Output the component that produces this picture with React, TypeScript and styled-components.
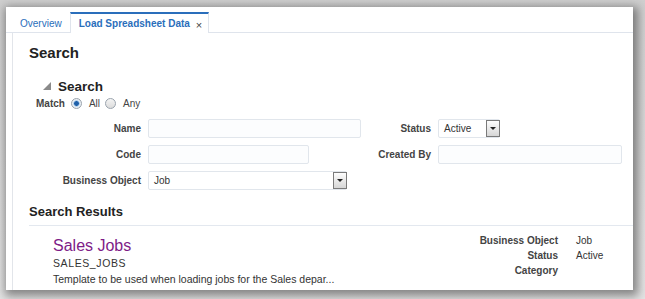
import React from "react";
import styled, { createGlobalStyle } from "styled-components";

const Global = createGlobalStyle`
  html, body { margin: 0; padding: 0; }
  body {
    background: #e6e6e6;
    font-family: "Liberation Sans", Arial, sans-serif;
    width: 645px;
    height: 299px;
    overflow: hidden;
  }
`;

const Stage = styled.div`
  width: 645px;
  height: 299px;
  padding: 7px 12px 9px 6px;
  box-sizing: border-box;
  background: linear-gradient(#cfcfcf, #e4e4e4);
`;

const Card = styled.div`
  width: 627px;
  height: 283px;
  background: #fff;
  box-shadow: 2px 3px 9px 3px rgba(0, 0, 0, 0.42);
  display: flex;
  flex-direction: column;
  overflow: hidden;
`;

const TabBar = styled.div`
  height: 26px;
  display: flex;
  align-items: flex-end;
  padding-left: 6px;
  border-bottom: 1px solid #dfe4ec;
  box-sizing: border-box;
`;

const Tab = styled.div<{ $active?: boolean }>`
  height: ${(p) => (p.$active ? "21px" : "20px")};
  display: flex;
  align-items: center;
  gap: 6px;
  padding: 0 ${(p) => (p.$active ? "6px 0 8px" : "8px")};
  font-size: 10px;
  color: #2a6ebb;
  font-weight: ${(p) => (p.$active ? "bold" : "normal")};
  background: #fff;
  box-sizing: border-box;
  border-top: ${(p) => (p.$active ? "2px solid #2a6ebb" : "none")};
  border-left: ${(p) => (p.$active ? "1px solid #dfe4ec" : "none")};
  border-right: ${(p) => (p.$active ? "1px solid #dfe4ec" : "none")};
  margin-bottom: ${(p) => (p.$active ? "-1px" : "0")};
  padding-top: ${(p) => (p.$active ? "0" : "2px")};
`;

const Close = styled.span`
  font-size: 11px;
  font-weight: normal;
  color: #444;
  margin-top: 2px;
`;

const Panel = styled.div`
  flex: 1;
  margin-left: 6px;
  border-left: 1px solid #e2e5ea;
  padding-left: 16px;
  display: flex;
  flex-direction: column;
`;

const H1 = styled.h1`
  margin: 11px 0 0;
  font-size: 15px;
  line-height: 18px;
  font-weight: bold;
  color: #222;
`;

const SubHeader = styled.div`
  margin: 15px 0 0 14px;
  display: flex;
  align-items: center;
  gap: 7px;
  height: 18px;
`;

const H2 = styled.h2`
  margin: 0;
  font-size: 13.5px;
  font-weight: bold;
  color: #222;
`;

const MatchRow = styled.div`
  margin: 1px 0 0 7px;
  display: flex;
  align-items: center;
  height: 14px;
  font-size: 10px;
  color: #444;
`;

const MatchLabel = styled.span`
  font-weight: bold;
  color: #444;
  margin-right: 6px;
`;

const Radio = styled.span<{ $on?: boolean }>`
  width: 9px;
  height: 9px;
  border-radius: 50%;
  border: 1px solid #9aa3ad;
  background: ${(p) =>
    p.$on
      ? "radial-gradient(circle, #1f5fa8 0 2px, #7fb1e0 2.5px, #e8eef4 3.5px)"
      : "linear-gradient(#f4f4f4, #dcdcdc)"};
  margin-right: 7px;
`;

const RadioText = styled.span`
  margin-right: 5px;
`;

const Form = styled.div`
  margin: 9px 0 0 -16px;
  display: grid;
  grid-template-columns: 128px 213px 63px 184px;
  grid-auto-rows: 19px;
  column-gap: 7px;
  row-gap: 7px;
  align-items: center;
`;

const Label = styled.label`
  text-align: right;
  font-size: 10px;
  font-weight: bold;
  color: #444;
  white-space: nowrap;
`;

const Input = styled.div<{ $w?: number }>`
  width: ${(p) => (p.$w ? `${p.$w}px` : "100%")};
  height: 19px;
  box-sizing: border-box;
  border: 1px solid #e1e6ec;
  background: #fcfdfe;
  border-radius: 2px;
`;

const Select = styled.div<{ $w: number }>`
  width: ${(p) => p.$w}px;
  height: 19px;
  box-sizing: border-box;
  border: 1px solid #e1e6ec;
  border-radius: 2px;
  display: flex;
  align-items: center;
  justify-content: space-between;
  font-size: 10px;
  color: #333;
  padding-left: 5px;
  background: #fff;
`;

const SelectBtn = styled.span`
  width: 14px;
  height: 17px;
  box-sizing: border-box;
  border: 1px solid #7a7a7a;
  background: linear-gradient(#fdfdfd, #d6d6d6);
  display: flex;
  align-items: center;
  justify-content: center;
  margin-right: -1px;
  &::after {
    content: "";
    border-left: 3px solid transparent;
    border-right: 3px solid transparent;
    border-top: 3px solid #222;
  }
`;

const ResultsHeader = styled.h2`
  margin: 14px 0 0;
  font-size: 13px;
  line-height: 16px;
  font-weight: bold;
  color: #222;
  padding-bottom: 5px;
  border-bottom: 1px solid #e3e8ef;
`;

const Result = styled.div`
  display: flex;
  justify-content: space-between;
  padding: 11px 13px 0 24px;
`;

const ResultMain = styled.div`
  display: flex;
  flex-direction: column;
`;

const ResultTitle = styled.div`
  font-size: 16px;
  line-height: 18px;
  color: #7e1b87;
`;

const ResultLine = styled.div<{ $caps?: boolean }>`
  font-size: 10.5px;
  line-height: 16px;
  color: #333;
  letter-spacing: ${(p) => (p.$caps ? "0.6px" : "0")};
`;

const Props = styled.div`
  display: grid;
  grid-template-columns: auto 44px;
  column-gap: 18px;
  grid-auto-rows: 15px;
  margin-top: -4px;
  font-size: 10px;
  align-items: center;
`;

const PropKey = styled.span`
  text-align: right;
  font-weight: bold;
  color: #444;
`;

const PropVal = styled.span`
  color: #333;
`;

const Triangle = () => (
  <svg width="8" height="8" viewBox="0 0 8 8">
    <polygon points="8,0 8,8 0,8" fill="#8a8a8a" />
  </svg>
);

export default function App() {
  return (
    <>
      <Global />
      <Stage>
        <Card>
          <TabBar>
            <Tab>Overview</Tab>
            <Tab $active>
              Load Spreadsheet Data <Close>×</Close>
            </Tab>
          </TabBar>
          <Panel>
            <H1>Search</H1>
            <SubHeader>
              <Triangle />
              <H2>Search</H2>
            </SubHeader>
            <MatchRow>
              <MatchLabel>Match</MatchLabel>
              <Radio $on />
              <RadioText>All</RadioText>
              <Radio />
              <RadioText>Any</RadioText>
            </MatchRow>
            <Form>
              <Label>Name</Label>
              <Input />
              <Label>Status</Label>
              <Select $w={62}>
                Active
                <SelectBtn />
              </Select>

              <Label>Code</Label>
              <Input $w={161} />
              <Label>Created By</Label>
              <Input />

              <Label>Business Object</Label>
              <Select $w={199}>
                Job
                <SelectBtn />
              </Select>
            </Form>
            <ResultsHeader>Search Results</ResultsHeader>
            <Result>
              <ResultMain>
                <ResultTitle>Sales Jobs</ResultTitle>
                <ResultLine $caps>SALES_JOBS</ResultLine>
                <ResultLine>Template to be used when loading jobs for the Sales depar...</ResultLine>
              </ResultMain>
              <Props>
                <PropKey>Business Object</PropKey>
                <PropVal>Job</PropVal>
                <PropKey>Status</PropKey>
                <PropVal>Active</PropVal>
                <PropKey>Category</PropKey>
                <PropVal />
              </Props>
            </Result>
          </Panel>
        </Card>
      </Stage>
    </>
  );
}
